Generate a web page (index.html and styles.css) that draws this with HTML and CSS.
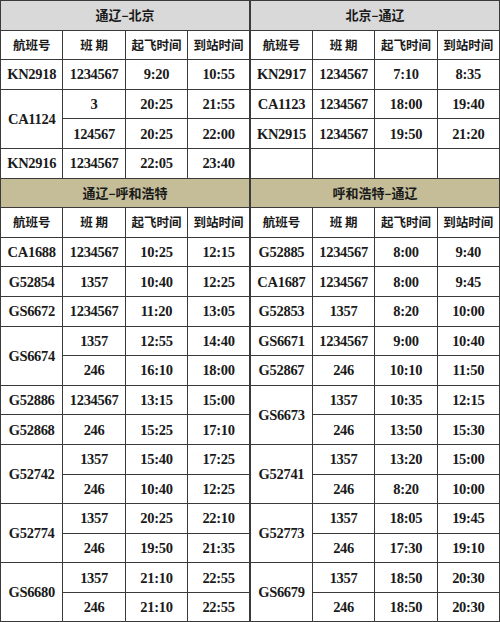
FILE: index.html
```html
<!DOCTYPE html>
<html lang="zh">
<head>
<meta charset="utf-8">
<title>航班时刻表</title>
<link rel="stylesheet" href="styles.css">
</head>
<body>
<table class="sched">
  <colgroup>
    <col><col><col><col>
    <col class="split"><col><col><col>
  </colgroup>
  <tbody>
    <tr class="title grey">
      <td colspan="4">通辽–北京</td>
      <td colspan="4" class="r">北京–通辽</td>
    </tr>
    <tr class="head">
      <td>航班号</td><td>班&nbsp;期</td><td>起飞时间</td><td>到站时间</td>
      <td class="r">航班号</td><td>班&nbsp;期</td><td>起飞时间</td><td>到站时间</td>
    </tr>
    <tr>
      <td>KN2918</td><td>1234567</td><td>9:20</td><td>10:55</td>
      <td class="r">KN2917</td><td>1234567</td><td>7:10</td><td>8:35</td>
    </tr>
    <tr>
      <td rowspan="2">CA1124</td><td>3</td><td>20:25</td><td>21:55</td>
      <td class="r">CA1123</td><td>1234567</td><td>18:00</td><td>19:40</td>
    </tr>
    <tr>
      <td>124567</td><td>20:25</td><td>22:00</td>
      <td class="r">KN2915</td><td>1234567</td><td>19:50</td><td>21:20</td>
    </tr>
    <tr>
      <td>KN2916</td><td>1234567</td><td>22:05</td><td>23:40</td>
      <td class="r"></td><td></td><td></td><td></td>
    </tr>
    <tr class="title tan">
      <td colspan="4">通辽–呼和浩特</td>
      <td colspan="4" class="r">呼和浩特–通辽</td>
    </tr>
    <tr class="head">
      <td>航班号</td><td>班&nbsp;期</td><td>起飞时间</td><td>到站时间</td>
      <td class="r">航班号</td><td>班&nbsp;期</td><td>起飞时间</td><td>到站时间</td>
    </tr>
    <tr>
      <td>CA1688</td><td>1234567</td><td>10:25</td><td>12:15</td>
      <td class="r">G52885</td><td>1234567</td><td>8:00</td><td>9:40</td>
    </tr>
    <tr>
      <td>G52854</td><td>1357</td><td>10:40</td><td>12:25</td>
      <td class="r">CA1687</td><td>1234567</td><td>8:00</td><td>9:45</td>
    </tr>
    <tr>
      <td>GS6672</td><td>1234567</td><td>11:20</td><td>13:05</td>
      <td class="r">G52853</td><td>1357</td><td>8:20</td><td>10:00</td>
    </tr>
    <tr>
      <td rowspan="2">GS6674</td><td>1357</td><td>12:55</td><td>14:40</td>
      <td class="r">GS6671</td><td>1234567</td><td>9:00</td><td>10:40</td>
    </tr>
    <tr>
      <td>246</td><td>16:10</td><td>18:00</td>
      <td class="r">G52867</td><td>246</td><td>10:10</td><td>11:50</td>
    </tr>
    <tr>
      <td>G52886</td><td>1234567</td><td>13:15</td><td>15:00</td>
      <td class="r" rowspan="2">GS6673</td><td>1357</td><td>10:35</td><td>12:15</td>
    </tr>
    <tr>
      <td>G52868</td><td>246</td><td>15:25</td><td>17:10</td>
      <td>246</td><td>13:50</td><td>15:30</td>
    </tr>
    <tr>
      <td rowspan="2">G52742</td><td>1357</td><td>15:40</td><td>17:25</td>
      <td class="r" rowspan="2">G52741</td><td>1357</td><td>13:20</td><td>15:00</td>
    </tr>
    <tr>
      <td>246</td><td>10:40</td><td>12:25</td>
      <td>246</td><td>8:20</td><td>10:00</td>
    </tr>
    <tr>
      <td rowspan="2">G52774</td><td>1357</td><td>20:25</td><td>22:10</td>
      <td class="r" rowspan="2">G52773</td><td>1357</td><td>18:05</td><td>19:45</td>
    </tr>
    <tr>
      <td>246</td><td>19:50</td><td>21:35</td>
      <td>246</td><td>17:30</td><td>19:10</td>
    </tr>
    <tr>
      <td rowspan="2">GS6680</td><td>1357</td><td>21:10</td><td>22:55</td>
      <td class="r" rowspan="2">GS6679</td><td>1357</td><td>18:50</td><td>20:30</td>
    </tr>
    <tr>
      <td>246</td><td>21:10</td><td>22:55</td>
      <td>246</td><td>18:50</td><td>20:30</td>
    </tr>
  </tbody>
</table>
</body>
</html>
```

FILE: styles.css
```css
html, body {
  margin: 0;
  padding: 0;
  background: #ffffff;
}

.sched {
  width: 500px;
  height: 622px;
  table-layout: fixed;
  border-collapse: collapse;
  font-family: "Liberation Serif", "Noto Sans CJK SC", serif;
  font-weight: bold;
  color: #1a1a1a;
}

.sched tr {
  height: 29.6px;
}

.sched td {
  border: 1px solid #3a3a3a;
  text-align: center;
  vertical-align: middle;
  padding: 0;
  line-height: 16px;
  font-size: 14.5px;
  letter-spacing: -0.3px;
  white-space: nowrap;
}

.sched td.r {
  border-left: 2px solid #3a3a3a;
}

.sched .head td {
  font-family: "Noto Sans CJK SC", sans-serif;
  font-size: 12.5px;
  letter-spacing: 0;
}

.sched .title td {
  font-family: "Noto Sans CJK SC", sans-serif;
  font-size: 13px;
  letter-spacing: 0;
}

.sched .grey td {
  background: #d9d9d9;
}

.sched .tan td {
  background: #c4bd97;
}
```
